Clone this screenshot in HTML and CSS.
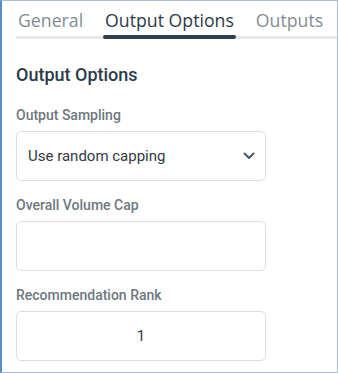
FILE: index.html
```html
<!DOCTYPE html>
<html lang="en">
<head>
<meta charset="utf-8">
<title>Output Options</title>
<link rel="stylesheet" href="styles.css">
</head>
<body>
<div class="panel">
  <nav class="tabs">
    <span class="tab">General</span>
    <span class="tab active">Output Options</span>
    <span class="tab">Outputs</span>
  </nav>
  <div class="content">
    <h2 class="heading">Output Options</h2>
    <div class="group">
      <label class="label">Output Sampling</label>
      <div class="field select">
        <span>Use random capping</span>
        <svg class="chevron" width="12" height="8" viewBox="0 0 12 8"><path d="M1.5 1.5 L6 6 L10.5 1.5" fill="none" stroke="#4a5966" stroke-width="2" stroke-linecap="round" stroke-linejoin="round"/></svg>
      </div>
    </div>
    <div class="group">
      <label class="label">Overall Volume Cap</label>
      <div class="field"></div>
    </div>
    <div class="group">
      <label class="label">Recommendation Rank</label>
      <div class="field center">1</div>
    </div>
  </div>
</div>
</body>
</html>
```

FILE: styles.css
```css
html, body {
  margin: 0;
  padding: 0;
  background: #ffffff;
}
.panel {
  box-sizing: border-box;
  width: 338px;
  height: 373px;
  border: 1px solid #a6bfe0;
  border-left: 2px solid #5a8cc9;
  font-family: Roboto, "Liberation Sans", sans-serif;
  overflow: hidden;
}
.tabs {
  display: flex;
  gap: 18px;
  margin-left: 14px;
  padding-top: 8px;
  box-shadow: inset 0 -3px 0 #e6e8ea;
}
.tab {
  position: relative;
  font-family: "Open Sans", Roboto, sans-serif;
  font-size: 17.7px;
  line-height: 22px;
  color: #818d96;
  padding: 0 2px 8px 2px;
}
.tab.active {
  color: #2b3a48;
}
.tab.active::after {
  content: "";
  position: absolute;
  left: 0;
  right: 0;
  bottom: 0;
  height: 4px;
  border-radius: 2px;
  background: #2e4050;
}
.content {
  padding: 24px 0 0 14px;
}
.heading {
  margin: 0 0 19px 0;
  font-size: 18px;
  line-height: 24px;
  font-weight: 500;
  color: #2b3a48;
}
.group {
  display: flex;
  flex-direction: column;
  gap: 7px;
  margin-bottom: 15px;
}
.label {
  font-size: 14px;
  line-height: 18px;
  font-weight: 500;
  color: #6d7880;
}
.field {
  box-sizing: border-box;
  width: 250px;
  height: 50px;
  border: 1px solid #dcdee0;
  border-radius: 5px;
  display: flex;
  align-items: center;
  padding: 0 11px;
  font-size: 15px;
  color: #2f3a44;
}
.select {
  justify-content: space-between;
}
.chevron {
  margin-right: -1px;
}
.center {
  justify-content: center;
}
```
